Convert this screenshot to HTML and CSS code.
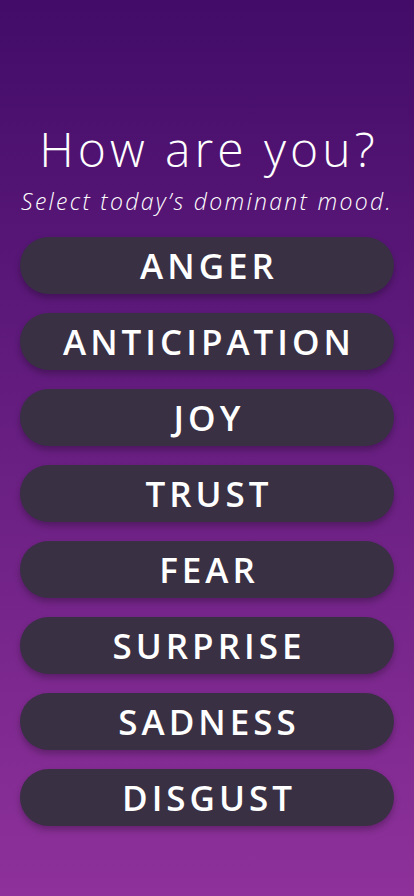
FILE: index.html
```html
<!DOCTYPE html>
<html lang="en">
<head>
  <meta charset="UTF-8" />
  <meta name="viewport" content="width=device-width, initial-scale=1.0" />
  <title>Mood</title>
  <link rel="stylesheet" href="styles.css">
</head>
<body>
  <main class="mood-page">
    <header class="mood-header">
      <h1>How are you?</h1>
      <p class="subtitle">Select today’s dominant mood.</p>
    </header>

    <div class="mood-list">
      <button class="mood-btn">ANGER</button>
      <button class="mood-btn">ANTICIPATION</button>
      <button class="mood-btn">JOY</button>
      <button class="mood-btn">TRUST</button>
      <button class="mood-btn">FEAR</button>
      <button class="mood-btn">SURPRISE</button>
      <button class="mood-btn">SADNESS</button>
      <button class="mood-btn">DISGUST</button>
    </div>
  </main>
</body>
</html>
```

FILE: styles.css
```css
body {
  margin: 0;
  padding: 0;
  font-family: 'Open Sans', sans-serif;
  color: #ffffff;
  min-height: 100vh;
  background: linear-gradient(to bottom, #420c68 0%, #8e319a 100%);
}
.mood-page {
  display: flex;
  flex-direction: column;
  align-items: center;
  padding: 118px 20px 40px;
}
.mood-header {
  text-align: center;
  margin-bottom: 21px;
  white-space: nowrap;
}
h1 {
  margin: 0 0 0 4px;
  font-size: 48px;
  font-weight: 300;
  letter-spacing: 4px;
  line-height: 62px;
}
.subtitle {
  margin: 6px 0 0;
  font-size: 23px;
  font-weight: 300;
  font-style: italic;
  letter-spacing: 2.3px;
  line-height: 30px;
}
.mood-list {
  width: 100%;
  display: flex;
  flex-direction: column;
  gap: 19px;
}
.mood-btn {
  height: 57px;
  border: none;
  border-radius: 29px;
  background: #393044;
  color: #ffffff;
  font-family: 'Open Sans', sans-serif;
  font-size: 35px;
  font-weight: 600;
  letter-spacing: 4px;
  box-shadow: 0 4px 6px rgba(0, 0, 0, 0.25);
  cursor: pointer;
  padding: 0 0 0 4px;
}
```
